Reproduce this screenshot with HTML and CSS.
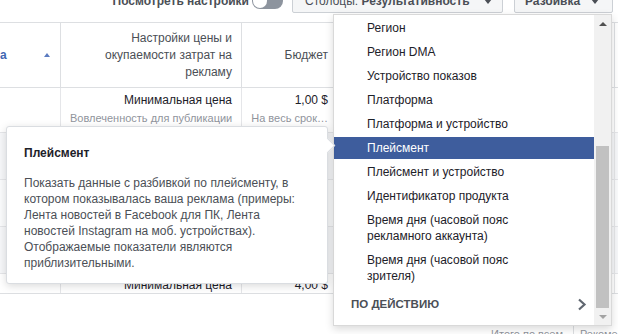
FILE: index.html
```html
<!DOCTYPE html>
<html lang="ru">
<head>
<meta charset="utf-8">
<title>Разбивка</title>
<link rel="stylesheet" href="styles.css">
</head>
<body>
<div class="page">
  <div class="toolbar">
    <span class="tb-label">Посмотреть настройки</span>
    <span class="toggle"><span class="knob"></span></span>
    <button class="btn btn-cols"><span class="btn-text">Столбцы: <b>Результативность</b></span><span class="caret"></span></button>
    <button class="btn btn-break"><span class="btn-text"><b>Разбивка</b></span><span class="caret"></span></button>
  </div>

  <div class="table-wrap">
    <div class="row head">
      <div class="cell c1"><span class="sort-name">а</span><span class="sort-arrow"></span></div>
      <div class="cell c2">Настройки цены и<br>окупаемости затрат на<br>рекламу</div>
      <div class="cell c3">Бюджет</div>
      <div class="cell c4"></div>
      <div class="cell c5"></div>
    </div>
    <div class="row body r1">
      <div class="cell c1"></div>
      <div class="cell c2"><div class="main">Минимальная цена</div><div class="sub">Вовлеченность для публикации</div></div>
      <div class="cell c3"><div class="main">1,00 $</div><div class="sub">На весь срок…</div></div>
      <div class="cell c4"></div>
      <div class="cell c5"></div>
    </div>
    <div class="row body r2 alt">
      <div class="cell c1"></div>
      <div class="cell c2"></div>
      <div class="cell c3"></div>
      <div class="cell c4"></div>
      <div class="cell c5"></div>
    </div>
    <div class="row body r3 alt2">
      <div class="cell c1"></div>
      <div class="cell c2"></div>
      <div class="cell c3"></div>
      <div class="cell c4"></div>
      <div class="cell c5"></div>
    </div>
    <div class="row body r4 alt">
      <div class="cell c1"></div>
      <div class="cell c2"></div>
      <div class="cell c3"></div>
      <div class="cell c4"></div>
      <div class="cell c5"></div>
    </div>
    <div class="row body r5">
      <div class="cell c1"></div>
      <div class="cell c2"><div class="main">Минимальная цена</div></div>
      <div class="cell c3"><div class="main">4,00 $</div></div>
      <div class="cell c4"></div>
      <div class="cell c5"></div>
    </div>
  </div>

  <div class="footer">
    <span class="f1">Итого по всем</span>
    <span class="f2">Рекомендовано</span>
  </div>

  <div class="tooltip">
    <div class="tt-title">Плейсмент</div>
    <div class="tt-body">Показать данные с разбивкой по плейсменту, в<br>котором показывалась ваша реклама (примеры:<br>Лента новостей в Facebook для ПК, Лента<br>новостей Instagram на моб. устройствах).<br>Отображаемые показатели являются<br>приблизительными.</div>
    <span class="tt-arrow"></span>
  </div>

  <div class="menu">
    <div class="menu-list">
      <div class="mi">Регион</div>
      <div class="mi">Регион DMA</div>
      <div class="mi">Устройство показов</div>
      <div class="mi">Платформа</div>
      <div class="mi">Платформа и устройство</div>
      <div class="mi active">Плейсмент</div>
      <div class="mi">Плейсмент и устройство</div>
      <div class="mi">Идентификатор продукта</div>
      <div class="mi">Время дня (часовой пояс<br>рекламного аккаунта)</div>
      <div class="mi">Время дня (часовой пояс<br>зрителя)</div>
      <div class="mi-section">
        <span>ПО ДЕЙСТВИЮ</span>
        <svg class="chev" width="10" height="13" viewBox="0 0 10 13"><path d="M2 1.5 L7.5 6.5 L2 11.5" fill="none" stroke="#606770" stroke-width="2.2"/></svg>
      </div>
    </div>
    <div class="scrollbar">
      <div class="sb-btn"><span class="tri-up"></span></div>
      <div class="sb-track"><div class="sb-thumb"></div></div>
      <div class="sb-btn"><span class="tri-down"></span></div>
    </div>
  </div>
</div>
</body>
</html>
```

FILE: styles.css
```css
* { box-sizing: border-box; }
html, body { margin: 0; padding: 0; }
body {
  width: 618px;
  height: 334px;
  overflow: hidden;
  background: #fff;
  font-family: "Liberation Sans", Arial, sans-serif;
  font-size: 12px;
  color: #1d2129;
}
.page { position: relative; width: 618px; height: 334px; overflow: hidden; }

/* toolbar */
.toolbar {
  display: flex;
  justify-content: flex-end;
  align-items: center;
  height: 24px;
  margin-top: -11px;
  padding-right: 5px;
}
.tb-label { font-weight: bold; color: #4b4f56; margin-right: 3px; white-space: nowrap; }
.toggle {
  width: 31px; height: 16px; border-radius: 8px;
  background: #8d949e;
  display: flex; align-items: center; padding: 1px;
  margin-right: 9px;
}
.knob { width: 14px; height: 14px; border-radius: 50%; background: #fff; }
.btn {
  font: inherit;
  height: 24px;
  background: #f5f6f7;
  border: 1px solid #ccd0d5;
  border-radius: 2px;
  color: #4b4f56;
  display: flex; align-items: center;
  white-space: nowrap;
}
.btn b { font-weight: bold; }
.btn-cols { width: 211px; padding: 0 10px 0 12px; margin-right: 11px; }
.btn-break { width: 99px; padding: 0 13px 0 10px; }
.caret {
  width: 0; height: 0; margin-left: auto;
  border-left: 4px solid transparent;
  border-right: 4px solid transparent;
  border-top: 5px solid #4b4f56;
}

/* table */
.table-wrap {
  margin-top: 9px;
  height: 272px;
  border-top: 1px solid #dddfe2;
  border-bottom: 1px solid #dddfe2;
  overflow: hidden;
}
.row { display: flex; border-bottom: 1px solid #e5e6e9; }
.head { height: 65px; border-bottom-color: #dddfe2; }
.r1 { height: 45px; }
.r2, .r3, .r4 { height: 47px; }
.r5 { height: 46px; }
.alt { background: #f6f7f9; }
.alt2 { background: #fafbfc; }
.cell { border-right: 1px solid #e5e6e9; flex: none; }
.head .cell { border-right-color: #dddfe2; }
.c1 { width: 61px; }
.c2 { width: 181px; }
.c3 { width: 96px; }
.c4 { width: 277px; }
.c5 { flex: 1; border-right: 0; }

.head .cell {
  display: flex; align-items: center; justify-content: flex-end;
  text-align: right; line-height: 17px; color: #4b4f56;
  padding: 0 9px;
}
.head .c1 { justify-content: space-between; padding: 0 10px 0 0; }
.sort-name { color: #4267b2; font-weight: bold; }
.sort-arrow {
  width: 0; height: 0;
  border-left: 3.5px solid transparent;
  border-right: 3.5px solid transparent;
  border-bottom: 4px solid #5b7bc0;
}

.body .cell { padding: 4px 9px 0; text-align: right; white-space: nowrap; overflow: hidden; }
.r5 .cell { padding-top: 3px; }
.main { line-height: 16px; color: #1d2129; }
.sub { font-size: 11px; line-height: 14px; margin-top: 3px; color: #90949c; }

/* footer fragment */
.footer {
  margin-top: 32px;
  display: flex; justify-content: flex-end;
  font-size: 11px; line-height: 16px; color: #90949c;
  white-space: nowrap; overflow: hidden;
}
.f1 { padding-right: 10px; border-right: 1px solid #dddfe2; }
.f2 { width: 44px; padding-left: 6px; overflow: hidden; }

/* tooltip */
.tooltip {
  position: absolute;
  left: 6px; top: 126px;
  width: 322px;
  padding: 18px 20px 12px 17px;
  background: #fff;
  border: 1px solid #dadde1;
  border-radius: 3px;
  box-shadow: 0 2px 8px rgba(0, 0, 0, 0.15);
  z-index: 3;
}
.tt-title { font-weight: bold; line-height: 16px; color: #1d2129; }
.tt-body { margin-top: 14px; line-height: 16px; color: #4b4f56; white-space: nowrap; }
.tt-arrow {
  position: absolute;
  right: -6px; top: 13px;
  width: 11px; height: 11px;
  background: #fff;
  border-top: 1px solid #dadde1;
  border-right: 1px solid #dadde1;
  transform: rotate(45deg);
}

/* dropdown menu */
.menu {
  position: absolute;
  left: 333px; top: 14px;
  width: 279px; height: 312px;
  background: #fff;
  border: 1px solid rgba(0, 0, 0, 0.15);
  box-shadow: 0 3px 8px rgba(0, 0, 0, 0.15);
  display: flex;
  z-index: 2;
}
.menu-list { flex: 1; overflow: hidden; padding-top: 2px; }
.mi {
  padding: 3px 8px 3px 33px;
  margin-bottom: 2px;
  line-height: 16px;
  color: #1d2129;
  white-space: nowrap;
}
.mi.active { background: #3e5d9d; color: #fff; }
.mi-section {
  display: flex; align-items: center; justify-content: space-between;
  height: 30px;
  padding: 0 7px 0 17px;
  font-size: 11.5px; font-weight: bold; color: #4b4f56;
}
.chev { display: block; }
.scrollbar {
  width: 17px; flex: none;
  display: flex; flex-direction: column;
  background: #f1f1f1;
}
.sb-btn { height: 17px; flex: none; display: flex; align-items: center; justify-content: center; }
.sb-track { flex: 1; padding: 0 2px; }
.sb-thumb { margin-top: 114px; height: 162px; background: #c1c1c1; }
.tri-up {
  width: 0; height: 0;
  border-left: 4px solid transparent;
  border-right: 4px solid transparent;
  border-bottom: 4px solid #505050;
}
.tri-down {
  width: 0; height: 0;
  border-left: 4px solid transparent;
  border-right: 4px solid transparent;
  border-top: 4px solid #a3a3a3;
}
```
